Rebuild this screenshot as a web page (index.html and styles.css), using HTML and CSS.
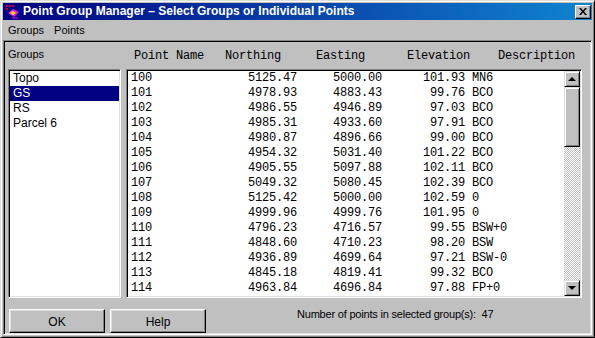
FILE: index.html
```html
<!DOCTYPE html>
<html lang="en">
<head>
    <meta charset="UTF-8">
    <title>Point Group Manager</title>
    <link rel="stylesheet" href="styles.css">
</head>
<body>
    <div class="window">
        <div class="titlebar">
            <svg class="app-icon" width="16" height="16" viewBox="0 0 16 16">
                <rect x="1" y="1" width="2" height="2" fill="#c00040"/>
                <rect x="4" y="1" width="2" height="2" fill="#c00040"/>
                <rect x="7" y="1" width="2" height="2" fill="#c00040"/>
                <rect x="1" y="4" width="2" height="2" fill="#c00040"/>
                <path d="M3 9 L8 5 L14 8 L9 13 Z" fill="#e020e0"/>
                <path d="M5 9 L8 7 L11 9 L8 11 Z" fill="#ffe000"/>
                <rect x="7" y="13" width="6" height="2" fill="#8000c0"/>
            </svg>
            <span class="title-text">Point Group Manager – Select Groups or Individual Points</span>
            <div class="close-btn">
                <svg width="8" height="7" viewBox="0 0 8 7">
                    <path d="M0 0h2l2 2.5L6 0h2L5 3.5 8 7H6L4 4.5 2 7H0l3-3.5z" fill="#000"/>
                </svg>
            </div>
        </div>

        <div class="menubar">
            <span class="menu-item">Groups</span>
            <span class="menu-item">Points</span>
        </div>

        <div class="client">
            <div class="top">
                <div class="groups-label">Groups</div>
                <div class="col-headers">
                    <span>Point Name</span>
                    <span>Northing</span>
                    <span>Easting</span>
                    <span>Elevation</span>
                    <span>Description</span>
                </div>

                <div class="listbox groups">
                    <div class="group-item">Topo</div>
                    <div class="group-item selected">GS</div>
                    <div class="group-item">RS</div>
                    <div class="group-item">Parcel 6</div>
                </div>

                <div class="listbox points">
                    <div class="rows">
                        <div class="pt"><span>100</span><span>5125.47</span><span>5000.00</span><span>101.93</span><span>MN6</span></div>
                        <div class="pt"><span>101</span><span>4978.93</span><span>4883.43</span><span>99.76</span><span>BCO</span></div>
                        <div class="pt"><span>102</span><span>4986.55</span><span>4946.89</span><span>97.03</span><span>BCO</span></div>
                        <div class="pt"><span>103</span><span>4985.31</span><span>4933.60</span><span>97.91</span><span>BCO</span></div>
                        <div class="pt"><span>104</span><span>4980.87</span><span>4896.66</span><span>99.00</span><span>BCO</span></div>
                        <div class="pt"><span>105</span><span>4954.32</span><span>5031.40</span><span>101.22</span><span>BCO</span></div>
                        <div class="pt"><span>106</span><span>4905.55</span><span>5097.88</span><span>102.11</span><span>BCO</span></div>
                        <div class="pt"><span>107</span><span>5049.32</span><span>5080.45</span><span>102.39</span><span>BCO</span></div>
                        <div class="pt"><span>108</span><span>5125.42</span><span>5000.00</span><span>102.59</span><span>0</span></div>
                        <div class="pt"><span>109</span><span>4999.96</span><span>4999.76</span><span>101.95</span><span>0</span></div>
                        <div class="pt"><span>110</span><span>4796.23</span><span>4716.57</span><span>99.55</span><span>BSW+0</span></div>
                        <div class="pt"><span>111</span><span>4848.60</span><span>4710.23</span><span>98.20</span><span>BSW</span></div>
                        <div class="pt"><span>112</span><span>4936.89</span><span>4699.64</span><span>97.21</span><span>BSW-0</span></div>
                        <div class="pt"><span>113</span><span>4845.18</span><span>4819.41</span><span>99.32</span><span>BCO</span></div>
                        <div class="pt"><span>114</span><span>4963.84</span><span>4696.84</span><span>97.88</span><span>FP+0</span></div>
                    </div>
                    <div class="scrollbar">
                        <div class="sb-btn"><span class="arrow up"></span></div>
                        <div class="sb-thumb"></div>
                        <div class="sb-track"></div>
                        <div class="sb-btn"><span class="arrow down"></span></div>
                    </div>
                </div>
            </div>

            <div class="bottom">
                <div class="button">OK</div>
                <div class="button">Help</div>
                <div class="status">Number of points in selected group(s):&nbsp; 47</div>
            </div>
        </div>
    </div>
</body>
</html>
```

FILE: styles.css
```css
body {
    margin: 0;
    width: 595px;
    height: 338px;
    overflow: hidden;
    background: #c0c0c0;
    font-family: "Liberation Sans", Arial, sans-serif;
    font-size: 11px;
    color: #000;
}
.window {
    box-sizing: border-box;
    width: 595px;
    height: 338px;
    display: flex;
    flex-direction: column;
    background: #c0c0c0;
    border: 1px solid;
    border-color: #dfdfdf #000 #000 #dfdfdf;
    box-shadow: inset 1px 1px #fff, inset -1px -1px #808080;
    padding: 2px;
}
.titlebar {
    height: 17px;
    display: flex;
    align-items: center;
    padding-left: 2px;
    background: linear-gradient(to right, #000080, #1084d0);
    color: #fff;
}
.app-icon {
    flex: none;
    margin-right: 2px;
}
.title-text {
    flex: 1;
    font-weight: bold;
    font-size: 12px;
    line-height: 17px;
    white-space: nowrap;
}
.close-btn {
    box-sizing: border-box;
    width: 16px;
    height: 14px;
    margin-right: 1px;
    display: flex;
    align-items: center;
    justify-content: center;
    background: #c0c0c0;
    border: 1px solid;
    border-color: #fff #000 #000 #fff;
    box-shadow: inset -1px -1px #808080;
}
.menubar {
    height: 20px;
    display: flex;
    box-sizing: border-box;
    padding-top: 1px;
    line-height: 19px;
}
.menu-item {
    padding: 0 5px;
}
.client {
    flex: 1;
    display: flex;
    flex-direction: column;
    padding: 0 7px 0 4px;
    border: 1px solid;
    border-color: #808080 #fff #fff #808080;
    box-shadow: inset 1px 1px #000, inset -1px -1px #dfdfdf;
    box-sizing: border-box;
}
.top {
    display: grid;
    grid-template-columns: 113px 456px;
    grid-template-rows: 27px 229px;
    column-gap: 5px;
    margin-top: 1px;
}
.groups-label {
    padding-top: 6px;
    line-height: 13px;
}
.col-headers {
    display: grid;
    grid-template-columns: repeat(4, 91px) auto;
    padding: 8px 0 0 8px;
    font-family: "Liberation Mono", "Courier New", monospace;
    font-size: 12px;
    letter-spacing: -0.2px;
    line-height: 13px;
}
.listbox {
    box-sizing: border-box;
    background: #fff;
    border: 1px solid;
    border-color: #808080 #fff #fff #808080;
    box-shadow: inset 1px 1px #000, inset -1px -1px #dfdfdf;
    padding: 1px;
}
.group-item {
    height: 15px;
    line-height: 15px;
    padding-left: 3px;
    font-size: 12px;
}
.group-item.selected {
    background: #000080;
    color: #fff;
}
.points {
    display: flex;
}
.rows {
    flex: 1;
    overflow: hidden;
}
.pt {
    display: grid;
    grid-template-columns: 96px 70px 85px 83px auto;
    height: 15px;
    line-height: 15px;
    padding-left: 3px;
    font-family: "Liberation Mono", "Courier New", monospace;
    font-size: 12px;
    letter-spacing: -0.2px;
    white-space: nowrap;
}
.pt span:nth-child(2),
.pt span:nth-child(3),
.pt span:nth-child(4) {
    text-align: right;
}
.pt span:nth-child(5) {
    padding-left: 7px;
}
.scrollbar {
    width: 16px;
    display: flex;
    flex-direction: column;
}
.sb-btn,
.sb-thumb {
    box-sizing: border-box;
    background: #c0c0c0;
    border: 1px solid;
    border-color: #dfdfdf #000 #000 #dfdfdf;
    box-shadow: inset 1px 1px #fff, inset -1px -1px #808080;
}
.sb-btn {
    height: 16px;
    display: flex;
    align-items: center;
    justify-content: center;
}
.sb-thumb {
    height: 60px;
}
.sb-track {
    flex: 1;
    background-image: repeating-conic-gradient(#fff 0 25%, #c0c0c0 0 50%);
    background-size: 2px 2px;
}
.arrow {
    width: 0;
    height: 0;
    border-left: 4px solid transparent;
    border-right: 4px solid transparent;
}
.arrow.up {
    border-bottom: 4px solid #000;
}
.arrow.down {
    border-top: 4px solid #000;
}
.bottom {
    display: flex;
    margin: 11px 0 0 1px;
    height: 24px;
}
.button {
    box-sizing: border-box;
    width: 96px;
    height: 24px;
    margin-right: 5px;
    display: flex;
    align-items: center;
    justify-content: center;
    padding-top: 2px;
    font-size: 12px;
    background: #c0c0c0;
    border: 1px solid;
    border-color: #fff #000 #000 #fff;
    box-shadow: inset -1px -1px #808080, inset 1px 1px #dfdfdf;
}
.status {
    margin-left: 86px;
    margin-top: -1px;
    line-height: 13px;
    letter-spacing: -0.2px;
    white-space: nowrap;
}
```
